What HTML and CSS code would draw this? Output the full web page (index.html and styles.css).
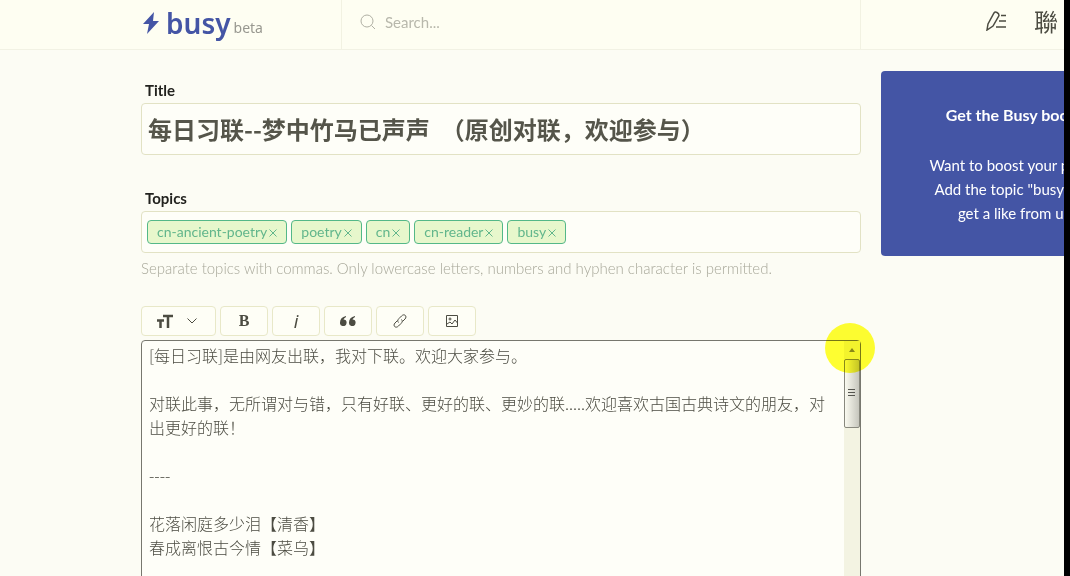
FILE: index.html
```html
<!DOCTYPE html>
<html lang="zh-CN">
<head>
<meta charset="utf-8">
<title>Busy</title>
<link rel="stylesheet" href="styles.css">
</head>
<body>
<div class="page">
  <header class="topbar">
    <a class="logo" href="#">
      <svg class="bolt" viewBox="0 0 16 22" aria-hidden="true"><path d="M11 0 0 12h6L4 22 16 9h-6z"/></svg>
      <span class="brand">busy</span><span class="beta">beta</span>
    </a>
    <label class="search">
      <svg class="search-icon" viewBox="0 0 16 16" aria-hidden="true"><circle cx="7" cy="7" r="6"/><path d="m11.5 11.5 3.500 3.500"/></svg>
      <input type="text" placeholder="Search..." aria-label="Search">
    </label>
    <nav class="actions">
      <a href="#" aria-label="Write"><svg class="write" viewBox="0 0 22 20" aria-hidden="true"><path d="M1 19 2 13 8 2Q9 .5 11 1.500t2 3L7 15zM15 4.500h5M13 10h7M10 16h10"/></svg></a>
      <a class="avatar" href="#">聯</a>
    </nav>
  </header>
  <div class="layout">
    <main class="editor">
      <label class="label" for="title">Title</label>
      <input class="title" id="title" type="text" value="每日习联--梦中竹马已声声&nbsp;&nbsp;（原创对联，欢迎参与）">
      <label class="label topics-label" for="topic">Topics</label>
      <div class="topics">
        <span class="tag">cn-ancient-poetry<button aria-label="Remove"><svg viewBox="0 0 8 8"><path d="m.5.5 7 7M7.500.5l-7 7"/></svg></button></span>
        <span class="tag">poetry<button aria-label="Remove"><svg viewBox="0 0 8 8"><path d="m.5.5 7 7M7.500.5l-7 7"/></svg></button></span>
        <span class="tag">cn<button aria-label="Remove"><svg viewBox="0 0 8 8"><path d="m.5.5 7 7M7.500.5l-7 7"/></svg></button></span>
        <span class="tag">cn-reader<button aria-label="Remove"><svg viewBox="0 0 8 8"><path d="m.5.5 7 7M7.500.5l-7 7"/></svg></button></span>
        <span class="tag">busy<button aria-label="Remove"><svg viewBox="0 0 8 8"><path d="m.5.5 7 7M7.500.5l-7 7"/></svg></button></span>
        <input class="topic-input" id="topic" type="text">
      </div>
      <p class="hint">Separate topics with commas. Only lowercase letters, numbers and hyphen character is permitted.</p>
      <div class="toolbar">
        <button class="tool heading" aria-label="Heading">
          <svg class="size" viewBox="0 0 16 14" aria-hidden="true"><path d="M6 2h10M11 2v12M0 6.500h7M3.500 6v8"/></svg>
          <svg class="chevron" viewBox="0 0 10 6" aria-hidden="true"><path d="m.5.5 4.500 4.500L9.500.5"/></svg>
        </button>
        <button class="tool bold">B</button>
        <button class="tool italic">i</button>
        <button class="tool" aria-label="Quote"><svg class="quote" viewBox="0 0 16 10" aria-hidden="true"><path d="M6 0C2 1 0 3 0 6.500a3.300 3.300 0 1 0 3.500-3Q4 2 6 1zM15 0c-4 1-6 3-6 6.500a3.300 3.300 0 1 0 3.500-3Q13 2 15 1z"/></svg></button>
        <button class="tool" aria-label="Link"><svg class="link" viewBox="0 0 14 14" aria-hidden="true"><path d="M5.500 8.500C4 7 5 5.500 6 4.500L8.500 2c3-3 6 .5 3.500 3L9.500 7.500M8.500 5.500C10 7 9 8.500 8 9.500L5.500 12c-3 3-6-.5-3.500-3L4.500 6.500"/></svg></button>
        <button class="tool" aria-label="Image"><svg class="image" viewBox="0 0 12 12" aria-hidden="true"><path d="M.5.5h11v11H.5zM1 9l3-2 2 2 3-4 2.500 3"/><circle cx="4" cy="4" r="1"/></svg></button>
      </div>
      <div class="body-box">
        <textarea class="body-text" aria-label="Post body">[每日习联]是由网友出联，我对下联。欢迎大家参与。

对联此事，无所谓对与错，只有好联、更好的联、更妙的联.....欢迎喜欢古国古典诗文的朋友，对出更好的联！

----

花落闲庭多少泪【清香】
春成离恨古今情【菜乌】</textarea>
        <div class="scrollbar"><span class="arrow"></span><span class="thumb"></span></div>
        <span class="pointer"></span>
      </div>
    </main>
    <aside class="promo">
      <h2>Get the Busy boost!</h2>
      <p>Want to boost your posts?<br>Add the topic "busy" and<br>get a like from us!</p>
    </aside>
  </div>
</div>
</body>
</html>
```
FILE: styles.css
```css
* { box-sizing: border-box; }
body {
  margin: 0;
  background: #000;
  color: #4c4c42;
  font-family: Lato, "Noto Sans CJK SC", sans-serif;
  font-size: 16px;
}
button, input, textarea { font: inherit; color: inherit; }
a { color: inherit; text-decoration: none; }
svg { display: block; fill: none; stroke: currentColor; }
.page {
  height: 100vh;
  margin-right: 6px;
  overflow: hidden;
  background: #fcfcf4;
}
.topbar, .layout {
  display: grid;
  grid-template-columns: minmax(0, 1fr) 183px;
  column-gap: 20px;
  padding-left: 141px;
}
.topbar {
  grid-template-columns: 200px minmax(0, 1fr) 203px;
  column-gap: 0;
  height: 50px;
  background: #fefef2;
  border-bottom: 1px solid #f2f2e4;
}
.logo { display: flex; align-items: center; color: #4455a5; padding: 0 0 3px 2px; }
.bolt { width: 16px; height: 22px; margin-right: 7px; fill: currentColor; stroke: none; }
.brand { font: 600 28px/44px "Noto Sans", sans-serif; }
.beta { color: #989890; font: 14px/24px "Noto Sans", sans-serif; padding: 9px 0 0 3px; }
.search {
  display: flex;
  align-items: center;
  gap: 9px;
  padding: 0 18px 6px;
  border: solid #f2f2e2;
  border-width: 0 1px;
  color: #b0b0a4;
}
.search-icon { width: 16px; height: 16px; }
.search input { flex: 1; min-width: 0; border: 0; padding: 0; background: none; outline: 0; font-size: 15px; }
.search input::placeholder { color: #b8b8ac; }
.actions { display: flex; justify-content: flex-end; align-items: center; gap: 26px; padding: 0 6px 8px 0; }
.write { width: 22px; height: 20px; stroke-width: 1.5; }
.avatar { font: 24px/40px "Noto Sans CJK TC", sans-serif; }
.editor { padding-top: 28px; }
.label { display: block; padding-left: 4px; margin-bottom: 1px; line-height: 24px; font-weight: bold; font-size: 15px; color: #22221e; }
.title {
  display: block;
  width: 100%;
  height: 52px;
  padding: 0 6px 2px;
  border: 1px solid #e2e2c4;
  border-radius: 4px;
  background: #fefef8;
  font: bold 24px "Noto Sans CJK SC", sans-serif;
  color: #55554a;
}
.topics-label { margin-top: 31px; }
.topics {
  display: flex;
  gap: 4px;
  height: 42px;
  padding: 8px 5px;
  border: 1px solid #e2e2c4;
  border-radius: 4px;
  background: #fefef8;
}
.tag {
  display: flex;
  align-items: center;
  gap: 2px;
  height: 24px;
  padding: 0 9px 2px;
  border: 1px solid #54b888;
  border-radius: 4px;
  background: #e7f7cc;
  color: #62b68c;
  font-size: 14px;
}
.tag button { padding: 3px 0 0; border: 0; background: none; }
.tag svg { width: 8px; height: 8px; }
.topic-input { flex: 1; min-width: 0; border: 0; background: none; }
.hint { margin: 3px 0 0; line-height: 24px; color: #a8a89a; font-weight: 300; font-size: 15px; white-space: nowrap; }
.toolbar { display: flex; gap: 4px; margin-top: 26px; }
.tool {
  display: flex;
  align-items: center;
  justify-content: center;
  width: 48px;
  height: 30px;
  padding: 0;
  border: 1px solid #e8e8c8;
  border-radius: 4px;
  background: #fefef6;
}
.heading { width: 75px; gap: 14px; padding-right: 3px; }
.size { width: 16px; height: 14px; stroke-width: 2.5; }
.chevron { width: 10px; height: 6px; }
.bold { font: bold 16px "Liberation Serif", serif; }
.italic { font: italic 18px "Noto Sans", sans-serif; }
.quote { width: 16px; height: 10px; fill: currentColor; stroke: none; }
.link { width: 14px; height: 14px; }
.image { width: 12px; height: 12px; }
.body-box {
  position: relative;
  display: flex;
  height: 300px;
  margin-top: 4px;
  border: 1px solid #77776e;
  border-radius: 4px;
  background: #fefef8;
}
.body-text {
  flex: 1;
  min-width: 0;
  padding: 2px 7px;
  border: 0;
  outline: 0;
  resize: none;
  overflow: hidden;
  background: none;
  font: 300 16px/24px "Noto Sans CJK SC", sans-serif;
}
.scrollbar { width: 16px; background: #f3f3e2; }
.arrow { display: block; width: 6px; height: 11px; margin: 0 5px 7px; border: solid transparent; border-width: 0 3px 4px; border-bottom-color: #888874; }
.thumb {
  display: block;
  height: 69px;
  border: 1px solid #88887e;
  border-radius: 2px;
  background: repeating-linear-gradient(#55554f 0 1px, transparent 1px 3px) 3px 29px / 7px 8px no-repeat, linear-gradient(90deg, #fafaf0, #c6c6bd);
}
.pointer {
  position: absolute;
  top: -18px;
  right: -15px;
  width: 50px;
  height: 50px;
  border-radius: 50%;
  background: #ffff32;
  mix-blend-mode: multiply;
  pointer-events: none;
}
.promo {
  width: 270px;
  height: 185px;
  margin-top: 21px;
  padding: 32px 20px;
  border-radius: 4px;
  background: #4455a5;
  color: #fff;
  text-align: center;
  font-size: 15px;
  line-height: 24px;
}
.promo h2 { margin: 0 0 26px; font-size: 16px; line-height: 24px; }
.promo p { margin: 0; }
```
